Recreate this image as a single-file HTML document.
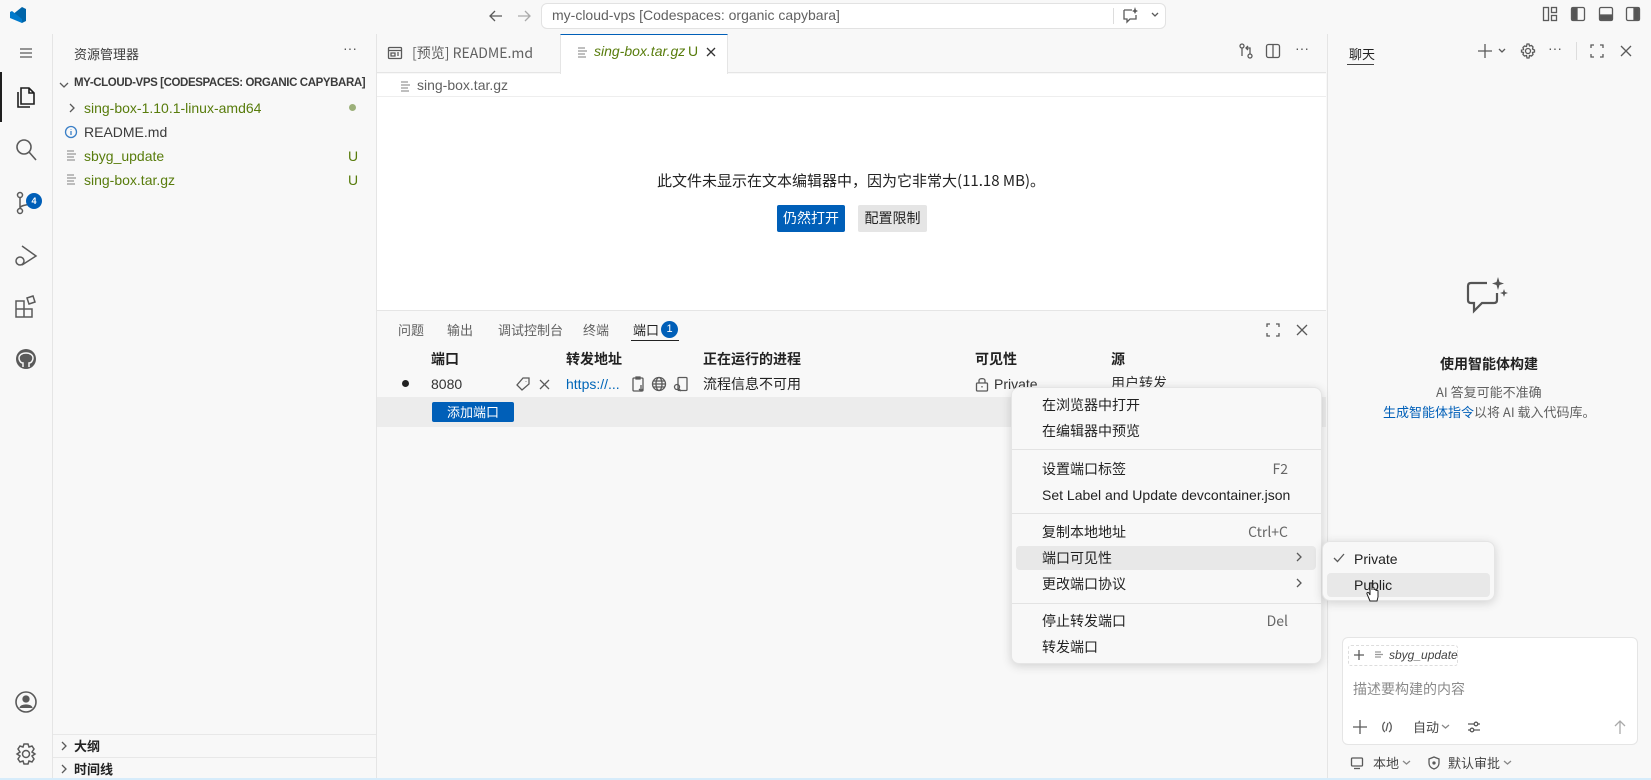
<!DOCTYPE html>
<html><head><meta charset="utf-8"><style>
*{margin:0;padding:0;box-sizing:border-box}
body{width:1651px;height:780px;overflow:hidden;background:#f8f8f8;font-family:"Liberation Sans","Noto Sans CJK SC",sans-serif;font-size:14px;color:#3b3b3b;position:relative}
.a{position:absolute;white-space:nowrap}
svg{position:absolute;fill:none;stroke:#5a5a5a;stroke-width:1.3}
.cjk{font-family:"Noto Sans CJK SC","Liberation Sans",sans-serif}
.g{color:#587c0c}
.mi{position:absolute;left:1042px;font-size:14px;color:#222}
.sc{position:absolute;right:0;color:#666}
</style></head><body>
<!-- title bar -->
<svg style="left:9px;top:6px" width="18" height="18" viewBox="0 0 18 18"><path d="M13 1 L17 3 V15 L13 17 L3 9 Z M13 5 V13 L7 9 Z" fill="#0065a9" stroke="none"/><path d="M1 6 L3 5 L13 13 L13 17 L1 12Z" fill="#007acc" stroke="none"/></svg>
<svg style="left:488px;top:8px" width="16" height="16"><path d="M14 8H2M7 3L2 8L7 13"/></svg>
<svg style="left:516px;top:8px" width="16" height="16"><path d="M2 8H14M9 3L14 8L9 13" stroke="#aaa"/></svg>
<div class="a" style="left:541px;top:3px;width:625px;height:26px;background:#fff;border:1px solid #e2e2e2;border-radius:6px"></div>
<div class="a" style="left:552px;top:7px;color:#616161;font-size:14px">my-cloud-vps [Codespaces: organic capybara]</div>
<div class="a" style="left:1113px;top:8px;width:1px;height:16px;background:#ddd"></div>
<svg style="left:1121px;top:6px" width="18" height="18"><path d="M3 4H11M3 4V13H6V16L9 13H15V9"/><path d="M14 1L15 4L17 5L15 6L14 8L13 6L11 5L13 4Z" fill="#5a5a5a" stroke="none"/></svg>
<svg style="left:1150px;top:9px" width="10" height="10"><path d="M2 4L5 7L8 4"/></svg>
<svg style="left:1542px;top:6px" width="16" height="16"><rect x="1.5" y="1.5" width="5" height="13"/><rect x="9.5" y="1.5" width="5" height="5"/><rect x="9.5" y="9.5" width="5" height="5"/></svg>
<svg style="left:1570px;top:6px" width="16" height="16"><rect x="1.5" y="1.5" width="13" height="13" rx="1.5"/><rect x="2" y="2" width="5" height="12" fill="#555"/></svg>
<svg style="left:1598px;top:6px" width="16" height="16"><rect x="1.5" y="1.5" width="13" height="13" rx="1.5"/><rect x="2" y="9" width="12" height="5" fill="#555"/></svg>
<svg style="left:1625px;top:6px" width="16" height="16"><rect x="1.5" y="1.5" width="13" height="13" rx="1.5"/><rect x="9" y="2" width="5" height="12" fill="#555"/></svg>

<!-- activity bar -->
<div class="a" style="left:0;top:34px;width:53px;height:746px;background:#f8f8f8;border-right:1px solid #e5e5e5"></div>
<div class="a" style="left:0;top:72px;width:2px;height:50px;background:#1f1f1f"></div>
<svg style="left:18px;top:45px" width="16" height="16"><path d="M2 4H14M2 8H14M2 12H14"/></svg>
<svg style="left:13px;top:84px" width="26" height="26"><path d="M8 4H16L21 9V20H8Z M16 4V9H21 M5 8V23H17" stroke="#1f1f1f" stroke-width="1.6"/></svg>
<svg style="left:13px;top:137px" width="26" height="26"><circle cx="11" cy="10" r="7" stroke-width="1.6"/><path d="M16 15L23 23" stroke-width="1.6"/></svg>
<svg style="left:13px;top:190px" width="26" height="26"><circle cx="7" cy="5" r="2.5" stroke-width="1.5"/><circle cx="7" cy="21" r="2.5" stroke-width="1.5"/><circle cx="18" cy="9" r="2.5" stroke-width="1.5"/><path d="M7 8V18M18 12C18 16 8 14 7 18" stroke-width="1.5"/></svg>
<div class="a" style="left:26px;top:193px;width:16px;height:16px;border-radius:8px;background:#005fb8;color:#fff;font-size:9px;text-align:center;line-height:16px;font-weight:bold">4</div>
<svg style="left:13px;top:243px" width="26" height="26"><path d="M9 3L23 13L9 22" stroke-width="1.5"/><circle cx="7" cy="18" r="4" stroke-width="1.5"/></svg>
<svg style="left:13px;top:294px" width="26" height="26"><path d="M3 7H11V15H3Z M3 15H11V23H3Z M11 15H19V23H11Z M14 4L20 2L22 8L16 10Z" stroke-width="1.5"/></svg>
<svg style="left:13px;top:346px" width="26" height="26"><circle cx="13" cy="13" r="10" fill="#5a5a5a" stroke="none"/><path d="M10 21V17C8 17 6 15 6 12C6 9 9 7 13 7C17 7 20 9 20 12C20 15 18 17 16 17V21" stroke="#f8f8f8" stroke-width="1.5"/></svg>
<svg style="left:13px;top:689px" width="26" height="26"><circle cx="13" cy="13" r="10" stroke-width="1.6"/><circle cx="13" cy="10" r="3" fill="#5a5a5a"/><path d="M7 19C8 15 18 15 19 19" fill="#5a5a5a"/></svg>
<svg style="left:13px;top:741px" width="26" height="26"><circle cx="13" cy="13" r="3.5" stroke-width="1.5"/><path d="M11 3H15L16 6L19 5L21 8L19 11L22 13L19 15L21 18L19 21L16 20L15 23H11L10 20L7 21L5 18L7 15L4 13L7 11L5 8L7 5L10 6Z" stroke-width="1.5"/></svg>

<!-- sidebar -->
<div class="a" style="left:53px;top:34px;width:324px;height:746px;background:#f8f8f8;border-right:1px solid #e5e5e5"></div>
<div class="a cjk" style="left:74px;top:44px;font-size:13px;color:#3b3b3b">资源管理器</div>
<div class="a" style="left:343px;top:40px;font-size:14px;color:#555">···</div>
<svg style="left:58px;top:79px" width="12" height="12"><path d="M2 4L6 8L10 4"/></svg>
<div class="a" style="left:74px;top:77px;width:300px;overflow:hidden;font-weight:bold;font-size:11.5px;color:#3b3b3b;letter-spacing:-0.4px">MY-CLOUD-VPS [CODESPACES: ORGANIC CAPYBARA]</div>
<svg style="left:66px;top:102px" width="12" height="12"><path d="M4 2L8 6L4 10"/></svg>
<div class="a g" style="left:84px;top:100px">sing-box-1.10.1-linux-amd64</div>
<div class="a" style="left:349px;top:104px;width:7px;height:7px;border-radius:4px;background:#9cb07a"></div>
<svg style="left:64px;top:125px" width="14" height="14"><circle cx="7" cy="7" r="5.5" stroke="#3a7fc6"/><path d="M7 6V10M7 4V4.5" stroke="#3a7fc6"/></svg>
<div class="a" style="left:84px;top:124px;color:#3b3b3b">README.md</div>
<svg style="left:66px;top:149px" width="12" height="12"><path d="M1 2H8M1 5H10M1 8H8M1 11H9" stroke="#999"/></svg>
<div class="a g" style="left:84px;top:148px">sbyg_update</div>
<div class="a g" style="left:348px;top:148px">U</div>
<svg style="left:66px;top:173px" width="12" height="12"><path d="M1 2H8M1 5H10M1 8H8M1 11H9" stroke="#999"/></svg>
<div class="a g" style="left:84px;top:172px">sing-box.tar.gz</div>
<div class="a g" style="left:348px;top:172px">U</div>
<div class="a" style="left:53px;top:734px;width:323px;height:1px;background:#e8e8e8"></div>
<div class="a" style="left:53px;top:757px;width:323px;height:1px;background:#e8e8e8"></div>
<svg style="left:58px;top:740px" width="12" height="12"><path d="M4 2L8 6L4 10"/></svg>
<div class="a cjk" style="left:74px;top:736px;font-size:13px;font-weight:bold;color:#222">大纲</div>
<svg style="left:58px;top:763px" width="12" height="12"><path d="M4 2L8 6L4 10"/></svg>
<div class="a cjk" style="left:74px;top:759px;font-size:13px;font-weight:bold;color:#222">时间线</div>

<!-- editor -->
<div class="a" style="left:377px;top:34px;width:949px;height:39px;background:#f8f8f8;border-bottom:1px solid #e5e5e5"></div>
<svg style="left:387px;top:45px" width="16" height="16"><rect x="1.5" y="2.5" width="13" height="11" rx="1"/><path d="M1.5 5.5H14.5M4 8H8V11H4ZM10 8H12M10 10H12"/></svg>
<div class="a cjk" style="left:412px;top:43px;color:#616161;font-size:14px">[预览] README.md</div>
<div class="a" style="left:560px;top:34px;width:168px;height:40px;background:#fff;border-top:1px solid #005fb8;border-right:1px solid #e5e5e5;border-left:1px solid #e5e5e5"></div>
<svg style="left:577px;top:46px" width="12" height="12"><path d="M1 2H8M1 5H10M1 8H8M1 11H9" stroke="#999"/></svg>
<div class="a g" style="left:594px;top:43px;font-style:italic">sing-box.tar.gz</div>
<div class="a g" style="left:688px;top:43px">U</div>
<svg style="left:705px;top:46px" width="12" height="12"><path d="M2 2L10 10M10 2L2 10" stroke="#333"/></svg>
<svg style="left:1238px;top:43px" width="16" height="16"><circle cx="4" cy="3" r="2"/><circle cx="12" cy="13" r="2"/><path d="M4 5V13M12 11V5H8M10 3L8 5L10 7"/></svg>
<svg style="left:1265px;top:43px" width="16" height="16"><rect x="1.5" y="1.5" width="13" height="13" rx="2"/><path d="M8 2V14"/></svg>
<div class="a" style="left:1295px;top:40px;font-size:14px;color:#555">···</div>
<div class="a" style="left:377px;top:74px;width:949px;height:236px;background:#fff"></div>
<div class="a" style="left:377px;top:96px;width:949px;height:1px;background:#eee"></div>
<svg style="left:400px;top:80px" width="12" height="12"><path d="M1 2H8M1 5H10M1 8H8M1 11H9" stroke="#999"/></svg>
<div class="a" style="left:417px;top:77px;color:#616161">sing-box.tar.gz</div>
<div class="a cjk" style="left:657px;top:170px;font-size:15px;color:#222">此文件未显示在文本编辑器中，因为它非常大(11.18 MB)。</div>
<div class="a cjk" style="left:777px;top:205px;width:68px;height:27px;background:#005fb8;color:#fff;border-radius:2px;text-align:center;line-height:27px">仍然打开</div>
<div class="a cjk" style="left:858px;top:205px;width:69px;height:27px;background:#e5e5e5;color:#222;border-radius:2px;text-align:center;line-height:27px">配置限制</div>

<!-- panel -->
<div class="a" style="left:377px;top:310px;width:949px;height:470px;background:#f8f8f8;border-top:1px solid #e5e5e5"></div>
<div class="a cjk" style="left:398px;top:320px;font-size:13px;color:#616161">问题</div>
<div class="a cjk" style="left:447px;top:320px;font-size:13px;color:#616161">输出</div>
<div class="a cjk" style="left:498px;top:320px;font-size:13px;color:#616161">调试控制台</div>
<div class="a cjk" style="left:583px;top:320px;font-size:13px;color:#616161">终端</div>
<div class="a cjk" style="left:633px;top:320px;font-size:13px;color:#222">端口</div>
<div class="a" style="left:661px;top:321px;width:17px;height:17px;border-radius:9px;background:#005fb8;color:#fff;font-size:11px;text-align:center;line-height:17px">1</div>
<div class="a" style="left:631px;top:340px;width:48px;height:1px;background:#222"></div>
<svg style="left:1266px;top:323px" width="14" height="14"><path d="M1 4V1H4M10 1H13V4M13 10V13H10M4 13H1V10"/></svg>
<svg style="left:1296px;top:324px" width="12" height="12"><path d="M1 1L11 11M11 1L1 11"/></svg>
<div class="a cjk" style="left:431px;top:349px;font-weight:bold;color:#222">端口</div>
<div class="a cjk" style="left:566px;top:349px;font-weight:bold;color:#222">转发地址</div>
<div class="a cjk" style="left:703px;top:349px;font-weight:bold;color:#222">正在运行的进程</div>
<div class="a cjk" style="left:975px;top:349px;font-weight:bold;color:#222">可见性</div>
<div class="a cjk" style="left:1111px;top:349px;font-weight:bold;color:#222">源</div>
<div class="a" style="left:402px;top:380px;width:7px;height:7px;border-radius:4px;background:#222"></div>
<div class="a" style="left:431px;top:376px;color:#333">8080</div>
<svg style="left:516px;top:377px" width="14" height="14"><path d="M7 1H13V7L6 13L1 8Z M10 4V4.5"/></svg>
<svg style="left:539px;top:379px" width="11" height="11"><path d="M1 1L10 10M10 1L1 10"/></svg>
<div class="a" style="left:566px;top:376px;color:#0066b8">https://...</div>
<svg style="left:631px;top:376px" width="16" height="16"><rect x="2" y="2" width="10" height="13" rx="1"/><path d="M5 1H9V3H5Z M10 9V15M8 13L10 15L12 13"/></svg>
<svg style="left:651px;top:376px" width="16" height="16"><circle cx="8" cy="8" r="6.5"/><ellipse cx="8" cy="8" rx="3" ry="6.5"/><path d="M1.5 8H14.5M2.5 5H13.5M2.5 11H13.5"/></svg>
<svg style="left:672px;top:376px" width="18" height="16"><rect x="6" y="1.5" width="9" height="13" rx="1"/><circle cx="5" cy="11" r="2.5"/><path d="M7 13L9 15"/></svg>
<div class="a cjk" style="left:703px;top:374px;color:#222">流程信息不可用</div>
<svg style="left:975px;top:376px" width="14" height="16"><rect x="1.5" y="7" width="11" height="8" rx="1"/><path d="M4 7V4.5C4 2 10 2 10 4.5V7M7 10V11.5"/></svg>
<div class="a" style="left:994px;top:376px;color:#333">Private</div>
<div class="a cjk" style="left:1111px;top:373px;color:#333">用户转发</div>
<div class="a" style="left:377px;top:397px;width:949px;height:30px;background:#ececec"></div>
<div class="a cjk" style="left:432px;top:402px;width:82px;height:20px;background:#005fb8;color:#fff;border-radius:2px;text-align:center;line-height:20px;font-size:13px">添加端口</div>

<!-- chat -->
<div class="a" style="left:1327px;top:34px;width:324px;height:746px;background:#f8f8f8;border-left:1px solid #e5e5e5"></div>
<div class="a cjk" style="left:1349px;top:44px;font-size:13px;color:#222">聊天</div>
<div class="a" style="left:1347px;top:64px;width:27px;height:1px;background:#444"></div>
<svg style="left:1477px;top:43px" width="16" height="16"><path d="M8 1V15M1 8H15"/></svg>
<svg style="left:1497px;top:46px" width="10" height="10"><path d="M2 3L5 6L8 3"/></svg>
<svg style="left:1520px;top:43px" width="16" height="16"><circle cx="8" cy="8" r="2.5"/><path d="M7 1H9L9.5 3L11.5 2.5L13 4L12.5 6L14.5 7V9L12.5 9.5L13 11.5L11.5 13L9.5 12.5L9 15H7L6.5 12.5L4.5 13L3 11.5L3.5 9.5L1.5 9V7L3.5 6.5L3 4.5L4.5 3L6.5 3.5Z"/></svg>
<div class="a" style="left:1548px;top:40px;font-size:14px;color:#555">···</div>
<div class="a" style="left:1576px;top:42px;width:1px;height:18px;background:#ddd"></div>
<svg style="left:1590px;top:44px" width="14" height="14"><path d="M1 4V1H4M10 1H13V4M13 10V13H10M4 13H1V10"/></svg>
<svg style="left:1620px;top:45px" width="12" height="12"><path d="M1 1L11 11M11 1L1 11"/></svg>
<svg style="left:1465px;top:276px" width="46" height="44"><path d="M22 7H6C4 7 3 8 3 10V24C3 26 4 27 6 27H9V35L17 27H29C31 27 32 26 32 24V17" stroke="#555" stroke-width="2.2"/><path d="M33 1L34.5 6L39 7.5L34.5 9L33 14L31.5 9L27 7.5L31.5 6Z M39 13L40 16L43 17L40 18L39 21L38 18L35 17L38 16Z" fill="#555" stroke="none"/></svg>
<div class="a cjk" style="left:1440px;top:354px;font-weight:bold;color:#222;font-size:14px">使用智能体构建</div>
<div class="a cjk" style="left:1436px;top:382px;color:#616161;font-size:13px">AI 答复可能不准确</div>
<div class="a cjk" style="left:1383px;top:402px;font-size:13px;color:#616161"><span style="color:#005fb8">生成智能体指令</span>以将 AI 载入代码库。</div>
<div class="a" style="left:1342px;top:637px;width:296px;height:108px;background:#fff;border:1px solid #e5e5e5;border-radius:6px"></div>
<div class="a" style="left:1348px;top:645px;width:110px;height:21px;border:1px dashed #ddd;border-radius:3px"></div>
<svg style="left:1353px;top:649px" width="12" height="12"><path d="M6 1V11M1 6H11"/></svg>
<svg style="left:1374px;top:650px" width="10" height="10"><path d="M1 2H7M1 4.5H9M1 7H7" stroke="#999"/></svg>
<div class="a" style="left:1389px;top:648px;font-size:12px;font-style:italic;color:#444">sbyg_update</div>
<div class="a cjk" style="left:1353px;top:679px;color:#8a8a8a;font-size:14px">描述要构建的内容</div>
<svg style="left:1352px;top:719px" width="16" height="16"><path d="M8 1V15M1 8H15"/></svg>
<svg style="left:1380px;top:720px" width="14" height="14"><path d="M5 2C2 4 2 10 5 12M9 2C12 4 12 10 9 12M8 3L6 11"/></svg>
<div class="a cjk" style="left:1413px;top:717px;font-size:13px;color:#444">自动</div>
<svg style="left:1441px;top:722px" width="9" height="9"><path d="M1 3L4.5 6L8 3" stroke="#888"/></svg>
<svg style="left:1466px;top:719px" width="16" height="16"><path d="M2 5H14M2 11H14"/><circle cx="10" cy="5" r="1.8" fill="#fff"/><circle cx="6" cy="11" r="1.8" fill="#fff"/></svg>
<svg style="left:1612px;top:719px" width="16" height="16"><path d="M8 15V2M3 7L8 2L13 7" stroke="#aaa"/></svg>
<svg style="left:1350px;top:756px" width="14" height="14"><rect x="1.5" y="2" width="11" height="8" rx="1"/><path d="M4 12.5H10"/></svg>
<div class="a cjk" style="left:1373px;top:753px;font-size:13px;color:#444">本地</div>
<svg style="left:1402px;top:758px" width="9" height="9"><path d="M1 3L4.5 6L8 3" stroke="#888"/></svg>
<svg style="left:1427px;top:756px" width="14" height="14"><path d="M7 1L12 3V7C12 10 10 12 7 13C4 12 2 10 2 7V3Z"/><circle cx="7" cy="7" r="1" fill="#5a5a5a"/></svg>
<div class="a cjk" style="left:1448px;top:753px;font-size:13px;color:#444">默认审批</div>
<svg style="left:1503px;top:758px" width="9" height="9"><path d="M1 3L4.5 6L8 3" stroke="#888"/></svg>
<div class="a" style="left:0;top:778px;width:1651px;height:2px;background:#d6ecfb"></div>

<!-- context menu -->
<div class="a" style="left:1011px;top:387px;width:311px;height:277px;background:#f8f8f8;border:1px solid #e5e5e5;border-radius:8px;box-shadow:0 2px 10px rgba(0,0,0,.16)"></div>
<div class="a" style="left:1016px;top:546px;width:300px;height:24px;background:#e8e8e8;border-radius:4px"></div>
<div class="a" style="left:1012px;top:449px;width:309px;height:1px;background:#e3e3e3"></div>
<div class="a" style="left:1012px;top:513px;width:309px;height:1px;background:#e3e3e3"></div>
<div class="a" style="left:1012px;top:603px;width:309px;height:1px;background:#e3e3e3"></div>
<div class="mi cjk" style="top:395px">在浏览器中打开</div>
<div class="mi cjk" style="top:421px">在编辑器中预览</div>
<div class="mi cjk" style="top:459px;width:246px">设置端口标签<span class="sc">F2</span></div>
<div class="mi" style="top:487px">Set Label and Update devcontainer.json</div>
<div class="mi cjk" style="top:522px;width:246px">复制本地地址<span class="sc">Ctrl+C</span></div>
<div class="mi cjk" style="top:548px">端口可见性</div>
<div class="mi cjk" style="top:574px">更改端口协议</div>
<svg style="left:1293px;top:551px" width="12" height="12"><path d="M4 2L8 6L4 10"/></svg>
<svg style="left:1293px;top:577px" width="12" height="12"><path d="M4 2L8 6L4 10"/></svg>
<div class="mi cjk" style="top:611px;width:246px">停止转发端口<span class="sc">Del</span></div>
<div class="mi cjk" style="top:637px">转发端口</div>
<!-- submenu -->
<div class="a" style="left:1322px;top:541px;width:173px;height:60px;background:#f8f8f8;border:1px solid #e5e5e5;border-radius:8px;box-shadow:0 2px 10px rgba(0,0,0,.16)"></div>
<div class="a" style="left:1327px;top:573px;width:163px;height:24px;background:#e8e8e8;border-radius:4px"></div>
<svg style="left:1333px;top:552px" width="12" height="12"><path d="M1 6L4.5 9.5L11 2"/></svg>
<div class="a" style="left:1354px;top:551px;color:#222">Private</div>
<div class="a" style="left:1354px;top:577px;color:#222">Public</div>
<svg style="left:1366px;top:581px" width="16" height="22"><path d="M4 20L1 13C0.5 11.5 2 11 3 12L4 14V3C4 1.5 6 1.5 6 3V9V7C6 6 8 6 8 7V9C8 8 10 8 10 9V10C10 9 12 9 12 10V16L11 20Z" fill="#fff" stroke="#222" stroke-width="1"/></svg>
</body></html>
